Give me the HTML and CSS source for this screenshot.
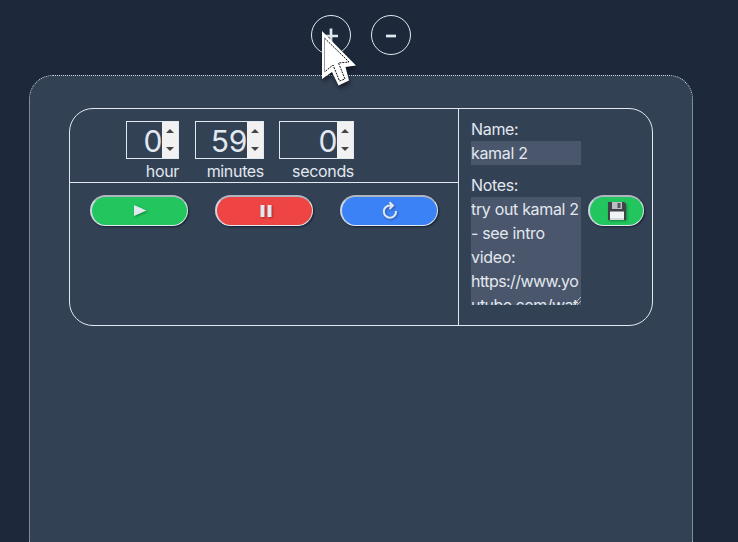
FILE: index.html
```html
<!DOCTYPE html>
<html lang="en">
<head>
<meta charset="utf-8">
<title>Timers</title>
<link rel="stylesheet" href="styles.css">
</head>
<body>
<header class="toolbar">
  <button class="round"><svg width="16" height="16" viewBox="0 0 16 16"><path d="M8 1.500v14M1 9h14"/></svg></button>
  <button class="round"><svg width="14" height="14" viewBox="0 0 14 14"><path d="M2 8h10"/></svg></button>
</header>
<main class="panel">
  <section class="timer">
    <div class="clock">
      <div class="times">
        <div class="unit hour"><div class="number"><span>0</span><i class="spinner"></i></div><label>hour</label></div>
        <div class="unit minutes"><div class="number"><span>59</span><i class="spinner"></i></div><label>minutes</label></div>
        <div class="unit seconds"><div class="number"><span>0</span><i class="spinner"></i></div><label>seconds</label></div>
      </div>
      <div class="controls">
        <button class="pill green"><svg width="14" height="14" viewBox="0 0 14 14"><path class="solid" d="M1 1L13.500 6.500L1 12Z"/></svg></button>
        <button class="pill red"><svg width="14" height="14" viewBox="0 0 14 14"><path class="solid" d="M2.500 1h4v12h-4zM9.500 1h4v12h-4z"/></svg></button>
        <button class="pill blue"><svg width="18" height="20" viewBox="0 0 18 20"><path class="stroke" d="M15 10A6.100 6.100 0 1 1 9 4.500H12M8.500 1.200L12 4.500L8.500 8"/></svg></button>
      </div>
    </div>
    <div class="details">
      <div class="fields">
        <label>Name:</label>
        <div class="name">kamal 2</div>
        <label class="notes-label">Notes:</label>
        <div class="notes">try out kamal 2<br>- see intro<br>video:<br><span class="link">https://www.yo<br>utube.com/wat</span><svg class="grip" width="8" height="8" viewBox="0 0 8 8"><path d="M0 8L8 0M4 8L8 4"/></svg></div>
      </div>
      <button class="pill green save"><svg width="20" height="20" viewBox="0 0 20 20"><path fill="#404247" d="M1 1h16l2 2v16H1z"/><path fill="#b9bfc3" d="M5 1h10v7H5z"/><path fill="#53575c" d="M10.500 2h3v5h-3z"/><path fill="#f1f3f5" d="M3 10.500h14V19H3z"/><path fill="#d5dade" d="M3 17h14v2H3z"/></svg></button>
    </div>
  </section>
</main>
<svg class="cursor" width="42" height="62" viewBox="0 0 42 62"><path fill="#fff" d="M2 1L36 35.500L25.500 37L29 50.500L18.500 55.500L12 42L2 49Z"/><path fill="none" stroke="#111" stroke-dasharray="2 1" d="M4.500 8L29 32L18.500 33L25 49L19.500 51L13 35L4.500 42"/><path fill="none" stroke="#999" d="M4.500 8V42"/></svg>
</body>
</html>
```
FILE: styles.css
```css
* { box-sizing: border-box; }
body {
  margin: 0;
  height: 542px;
  overflow: hidden;
  display: flex;
  flex-direction: column;
  background: #1d293b;
  color: #e2e8f0;
  font: 16px/24px Inter, "Liberation Sans", sans-serif;
  letter-spacing: -0.33px;
}
button { padding: 0; display: flex; align-items: center; justify-content: center; }
.toolbar { height: 75px; flex: none; padding: 15px 16px 0 0; display: flex; justify-content: center; gap: 20px; }
.round { width: 40px; height: 40px; border: 1px solid #e2e8f0; border-radius: 50%; background: none; }
.round path { stroke: #e2e8f0; stroke-width: 2.7; }
.panel {
  flex: none;
  width: 664px;
  height: 467px;
  margin-left: 29px;
  padding: 32px 40px 0;
  border: 1px dotted #cbd5e1;
  border-bottom: 0;
  border-radius: 24px 24px 0 0;
  background: #334155;
}
.timer { width: 584px; height: 218px; margin-left: -1px; border: 1px solid #e2e8f0; border-radius: 24px; display: flex; }
.clock { width: 389px; border-right: 1px solid #e2e8f0; }
.times { height: 74px; padding: 12px 0 0 56px; display: flex; border-bottom: 1px solid #e2e8f0; }
.unit { text-align: right; }
.hour { width: 53px; margin-right: 16px; }
.minutes { width: 69px; margin-right: 15px; }
.seconds { width: 75px; }
.unit label { display: block; line-height: 24px; }
.number { height: 38px; display: flex; justify-content: flex-end; border: 1px solid #e2e8f0; font-size: 30px; line-height: 38px; }
.spinner { width: 16px; background: #f1f1f1; display: flex; flex-direction: column; align-items: center; justify-content: space-between; padding: 7px 0 7px; }
.spinner::before, .spinner::after { content: ""; border: 4.5px solid transparent; }
.spinner::before { border-top: 0; border-bottom-color: #444; }
.spinner::after { border-bottom: 0; border-top-color: #444; }
.controls { display: flex; gap: 27px; padding: 12px 20px; }
.pill { width: 98px; height: 31px; border: 2px solid; border-color: #aeb6c0 #d5ebdd #e2e8f0 #cbd5e1; border-width: 2px 1px 1px 2px; border-radius: 16px; box-shadow: 1px 1px 2px #172033; }
.pill svg { filter: drop-shadow(1px 1px 1px #0005); }
.green { background: #22c55e; }
.red { background: #ef4444; }
.blue { background: #3b82f6; }
.solid { fill: #e2e8f0; }
.stroke { fill: none; stroke: #e2e8f0; stroke-width: 2; }
.details { display: flex; padding: 8px 0 0 12px; }
.fields { width: 110px; margin-right: 7px; }
.fields label { display: block; }
.name { height: 24px; background: #4a566b; }
.fields .notes-label { margin-top: 8px; }
.notes { position: relative; height: 108px; overflow: hidden; white-space: nowrap; background: #4a566b; }
.link { letter-spacing: -0.55px; }
.grip { position: absolute; right: 0; bottom: 0; }
.grip path { stroke: #d0d5dc; stroke-width: .8; }
.save { width: 56px; margin-top: 78px; }
.cursor { position: absolute; left: 320px; top: 30px; filter: drop-shadow(1px 3px 2px #0008); }
```
